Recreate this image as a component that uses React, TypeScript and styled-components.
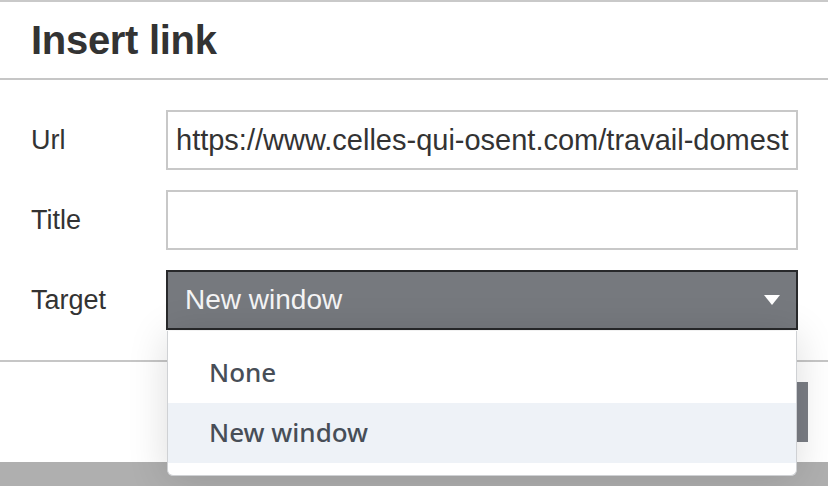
import React from "react";
import styled, { createGlobalStyle } from "styled-components";

const Global = createGlobalStyle`
  html, body { margin: 0; padding: 0; }
  body {
    background: #afafaf;
    font-family: "Liberation Sans", Arial, Helvetica, sans-serif;
    width: 828px;
    height: 486px;
    overflow: hidden;
  }
`;

const Dialog = styled.div`
  position: relative;
  width: 828px;
  background: #ffffff;
  border-top: 2px solid #c9c9c9;
  box-sizing: border-box;
`;

const Header = styled.div`
  display: flex;
  align-items: center;
  padding-left: 31px;
  border-bottom: 2px solid #c6c6c6;
  box-sizing: border-box;
  height: 78px;
`;

const Title = styled.h1`
  margin: 0;
  font-size: 40px;
  font-weight: 700;
  color: #333333;
  letter-spacing: -0.3px;
`;

const Body = styled.div`
  padding: 30px 30px 30px 31px;
  display: flex;
  flex-direction: column;
  gap: 20px;
  border-bottom: 2px solid #c6c6c6;
`;

const Row = styled.div`
  position: relative;
  display: grid;
  grid-template-columns: 135px 632px;
  align-items: center;
  height: 60px;
`;

const Label = styled.label`
  font-size: 27px;
  color: #333333;
`;

const TextBox = styled.div`
  box-sizing: border-box;
  height: 60px;
  border: 2px solid #c8c8c8;
  background: #ffffff;
  padding: 0 8px;
  display: flex;
  align-items: center;
  overflow: hidden;
  white-space: nowrap;
  font-size: 29px;
  color: #333333;
`;

const SelectBox = styled.div`
  box-sizing: border-box;
  height: 60px;
  border: 2px solid #28292b;
  background: #76797e;
  padding: 0 16px 0 17px;
  display: flex;
  align-items: center;
  justify-content: space-between;
  font-size: 28px;
  color: #f4f4f5;
`;

const Caret = styled.span`
  width: 0;
  height: 0;
  border-left: 8px solid transparent;
  border-right: 8px solid transparent;
  border-top: 10px solid #ffffff;
`;

const Popup = styled.div`
  position: absolute;
  top: 61px;
  left: 136px;
  width: 630px;
  box-sizing: border-box;
  background: #ffffff;
  border: 1px solid #cfd1d4;
  border-top: none;
  border-radius: 0 0 6px 6px;
  padding: 12px 0;
  box-shadow: 0 4px 40px rgba(0, 0, 0, 0.14);
  z-index: 10;
`;

const Option = styled.div<{ $active?: boolean }>`
  height: 60px;
  display: flex;
  align-items: center;
  padding-left: 41px;
  padding-bottom: 3px;
  box-sizing: border-box;
  font-family: "Noto Sans", "Open Sans", sans-serif;
  font-weight: 500;
  font-size: 26px;
  color: #474e57;
  background: ${(p) => (p.$active ? "#eef2f7" : "#ffffff")};
`;

const Footer = styled.div`
  height: 100px;
  box-sizing: border-box;
  padding: 20px 20px 20px 30px;
  display: flex;
  justify-content: flex-end;
  align-items: flex-start;
`;

const OkButton = styled.button`
  height: 60px;
  width: 110px;
  border: none;
  background: #7b7e85;
  color: #ffffff;
  font-family: "Liberation Sans", Arial, sans-serif;
  font-size: 27px;
`;

export default function App() {
  return (
    <>
      <Global />
      <Dialog>
        <Header>
          <Title>Insert link</Title>
        </Header>
        <Body>
          <Row>
            <Label>Url</Label>
            <TextBox>https://www.celles-qui-osent.com/travail-domest</TextBox>
          </Row>
          <Row>
            <Label>Title</Label>
            <TextBox />
          </Row>
          <Row>
            <Label>Target</Label>
            <SelectBox>
              <span>New window</span>
              <Caret />
            </SelectBox>
            <Popup>
              <Option>None</Option>
              <Option $active>New window</Option>
            </Popup>
          </Row>
        </Body>
        <Footer>
          <OkButton>Ok</OkButton>
        </Footer>
      </Dialog>
    </>
  );
}
